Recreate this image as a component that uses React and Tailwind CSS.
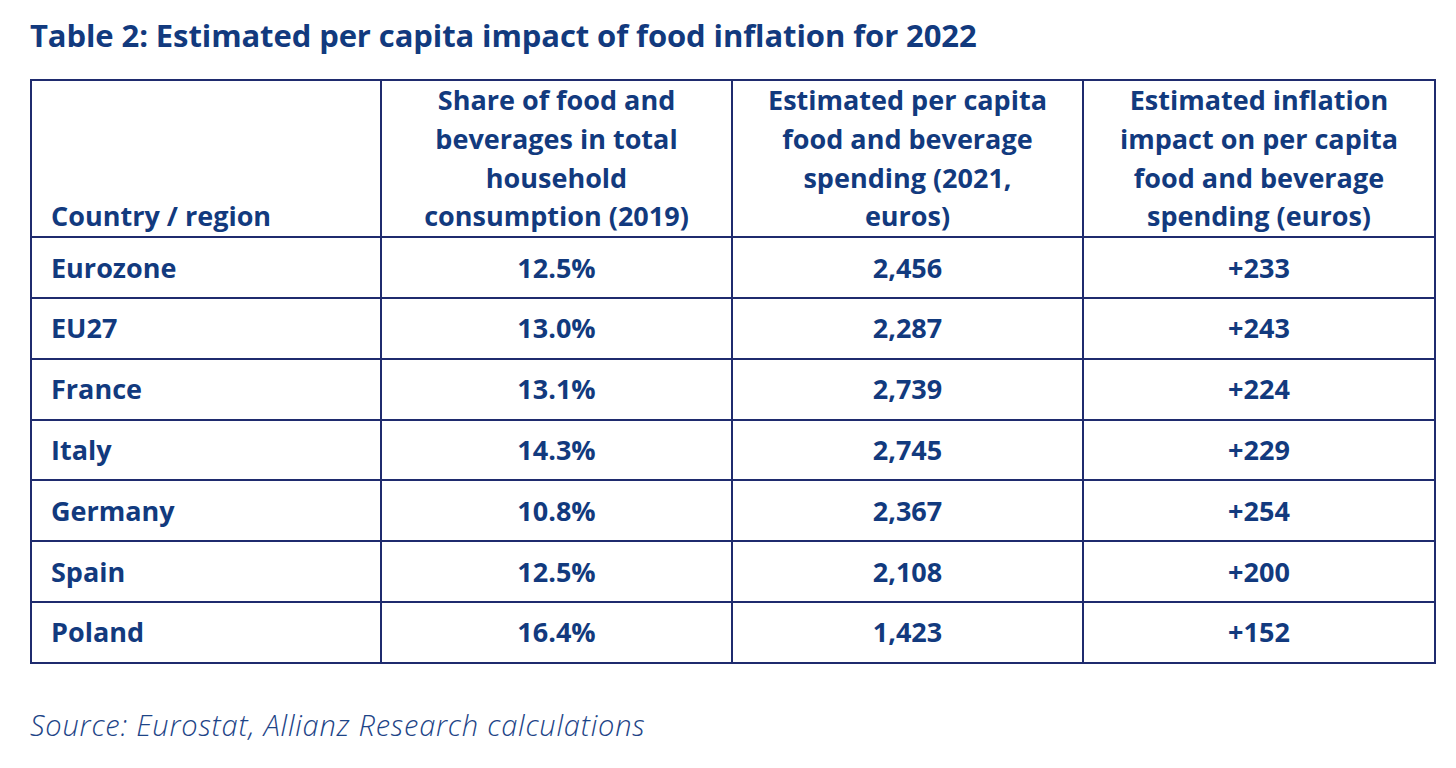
import React from "react";

const rows = [
  ["Eurozone", "12.5%", "2,456", "+233"],
  ["EU27", "13.0%", "2,287", "+243"],
  ["France", "13.1%", "2,739", "+224"],
  ["Italy", "14.3%", "2,745", "+229"],
  ["Germany", "10.8%", "2,367", "+254"],
  ["Spain", "12.5%", "2,108", "+200"],
  ["Poland", "16.4%", "1,423", "+152"],
];

export default function App() {
  return (
    <div
      className="w-[1456px] h-[768px] bg-white overflow-hidden text-[#123a7e]"
      style={{ fontFamily: "'Open Sans', 'Liberation Sans', sans-serif" }}
    >
      <div className="pl-[30px] pt-[16px]">
        <h1 className="text-[31px] leading-[38px] font-bold tracking-[-0.1px]">
          Table 2: Estimated per capita impact of food inflation for 2022
        </h1>
        <table className="mt-[25px] border-collapse border-2 border-[#14205e] text-[27px] font-bold">
          <thead>
            <tr>
              <th className="w-[350px] border-2 border-[#1f2b6e] align-bottom text-left pl-[19px] pb-0 leading-[38.8px] font-bold">
                Country / region
              </th>
              <th className="w-[351px] border-2 border-[#1f2b6e] align-bottom text-center pb-0 leading-[38.8px] font-bold">
                Share of food and
                <br />
                beverages in total
                <br />
                household
                <br />
                consumption (2019)
              </th>
              <th className="w-[351px] border-2 border-[#1f2b6e] align-bottom text-center pb-0 leading-[38.8px] font-bold">
                Estimated per capita
                <br />
                food and beverage
                <br />
                spending (2021,
                <br />
                euros)
              </th>
              <th className="w-[352px] border-2 border-[#1f2b6e] align-bottom text-center pb-0 leading-[38.8px] font-bold">
                Estimated inflation
                <br />
                impact on per capita
                <br />
                food and beverage
                <br />
                spending (euros)
              </th>
            </tr>
          </thead>
          <tbody>
            {rows.map((r) => (
              <tr key={r[0]}>
                <td className="h-[60.8px] border-2 border-[#1f2b6e] pl-[19px] align-middle leading-[30px]">
                  {r[0]}
                </td>
                <td className="border-2 border-[#1f2b6e] text-center align-middle leading-[30px]">
                  {r[1]}
                </td>
                <td className="border-2 border-[#1f2b6e] text-center align-middle leading-[30px]">
                  {r[2]}
                </td>
                <td className="border-2 border-[#1f2b6e] text-center align-middle leading-[30px]">
                  {r[3]}
                </td>
              </tr>
            ))}
          </tbody>
        </table>
        <p className="mt-[44px] text-[29px] leading-[34px] italic font-light tracking-[0.8px] text-[#1d4487]">
          Source: Eurostat, Allianz Research calculations
        </p>
      </div>
    </div>
  );
}
